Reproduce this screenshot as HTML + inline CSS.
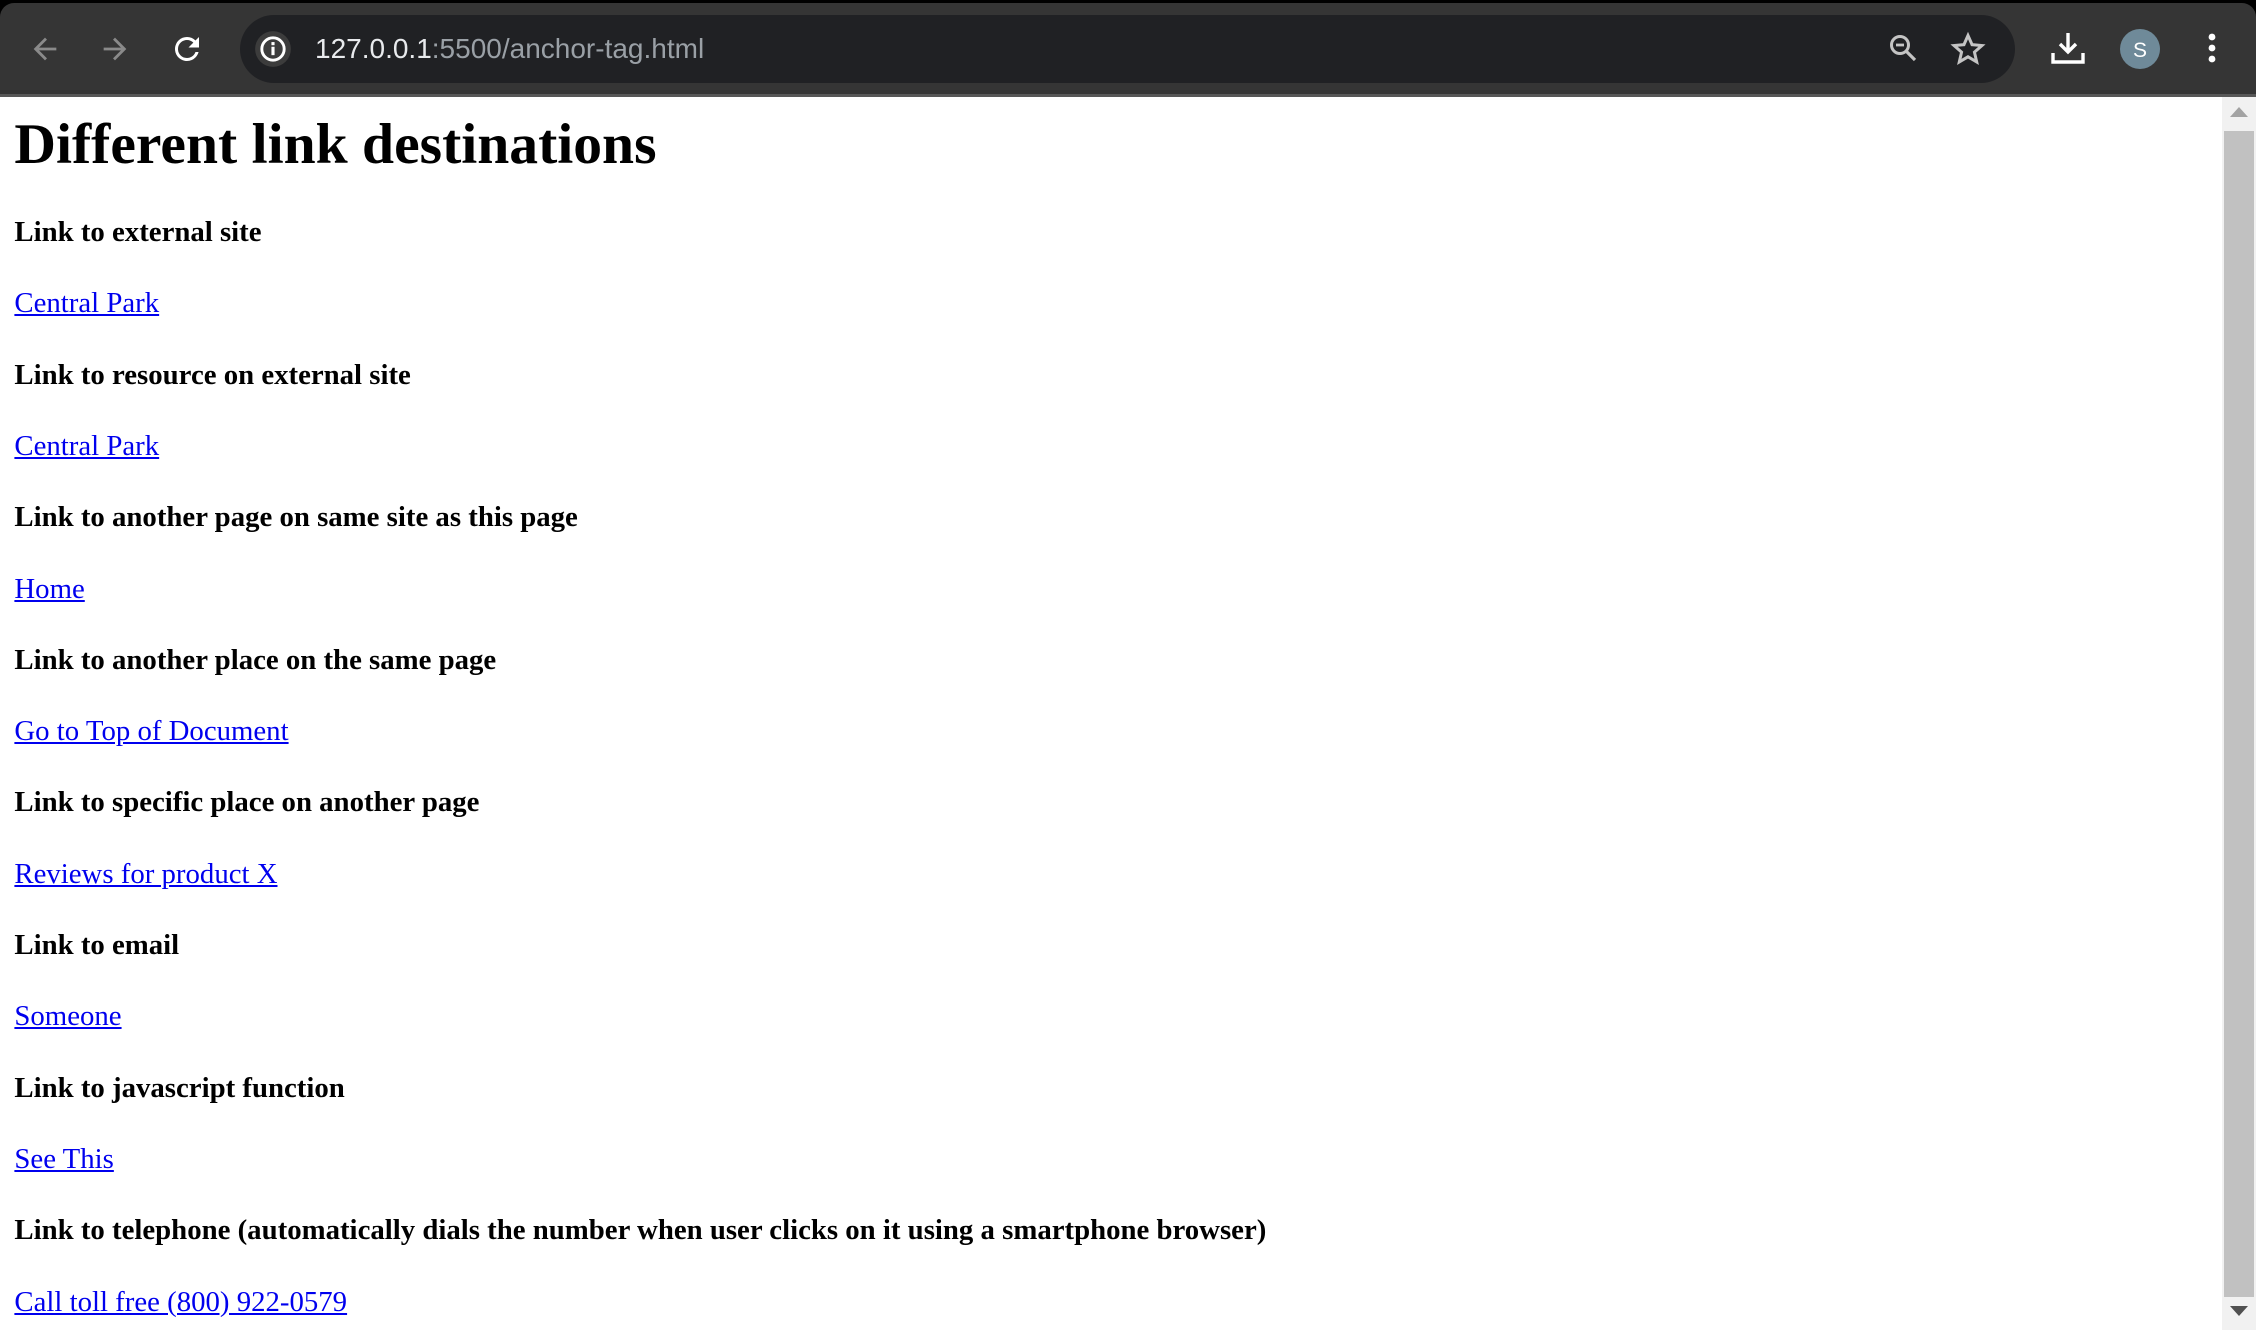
<!DOCTYPE html>
<html><head><meta charset="utf-8">
<style>
html,body{margin:0;padding:0;width:2256px;height:1330px;overflow:hidden;background:#000;}
#bar{position:absolute;left:0;top:3px;width:2256px;height:91px;background:#353535;border-radius:14px 14px 0 0;}
#line{position:absolute;left:0;top:94px;width:2256px;height:3px;background:#575757;}
#omni{position:absolute;left:240px;top:15px;width:1775px;height:68px;background:#202124;border-radius:34px;}
#url{position:absolute;left:315px;top:30px;font-family:"Liberation Sans",sans-serif;font-size:28px;color:#e8eaed;line-height:38px;letter-spacing:0px}
#url span{color:#9aa0a6}
#content{position:absolute;left:0;top:97px;width:2222px;height:1233px;background:#fff;overflow:hidden;}
#inner{zoom:1.8;margin:8px;margin-top:0;font-family:"Liberation Serif",serif;font-size:16px;color:#000;}
#inner h1{margin:0.67em 0;margin-top:8.6px;font-size:2em;}
#inner h4{margin:1.33em 0;}
#inner p{margin:1em 0;}
#inner a{color:#0000ee;}
#sb{position:absolute;left:2222px;top:97px;width:34px;height:1233px;background:#f1f1f1;}
#thumb{position:absolute;left:2px;top:34px;width:30px;height:1166px;background:#c1c1c1;}
svg{position:absolute;}
</style></head><body>
<div id="bar"></div>
<div id="line"></div>
<svg style="left:28px;top:32px" width="34" height="34" viewBox="0 0 24 24"><path d="M20 11H7.8l5.6-5.6L12 4l-8 8 8 8 1.4-1.4L7.8 13H20z" fill="#8a8a8a"/></svg>
<svg style="left:98px;top:32px" width="34" height="34" viewBox="0 0 24 24"><path d="M4 11h12.2l-5.6-5.6L12 4l8 8-8 8-1.4-1.4 5.6-5.6H4z" fill="#8a8a8a"/></svg>
<svg style="left:169px;top:31px" width="36" height="36" viewBox="0 0 24 24"><path d="M17.65 6.35A7.96 7.96 0 0 0 12 4a8 8 0 1 0 7.730 10h-2.08A6 6 0 1 1 12 6c1.66 0 3.14.69 4.22 1.78L13 11h7V4z" fill="#fff"/></svg>
<div id="omni"></div>
<svg style="left:254px;top:30px" width="38" height="38" viewBox="0 0 34 34"><circle cx="17" cy="17" r="16" fill="#3c3c3c"/><circle cx="17" cy="17" r="10" fill="none" stroke="#fff" stroke-width="2.6"/><rect x="15.6" y="15" width="2.8" height="7.5" fill="#fff"/><rect x="15.6" y="10.8" width="2.8" height="2.8" fill="#fff"/></svg>
<div id="url">127.0.0.1<span>:5500/anchor-tag.html</span></div>
<svg style="left:1887px;top:32px" width="34" height="34" viewBox="0 0 34 34"><circle cx="13" cy="13" r="8.5" fill="none" stroke="#c4c4c4" stroke-width="3"/><path d="M19 19l9 9" stroke="#c4c4c4" stroke-width="3.2"/><rect x="9" y="11.6" width="8" height="2.8" fill="#c4c4c4"/></svg>
<svg style="left:1950px;top:31px" width="36" height="36" viewBox="0 0 24 24"><path d="M12 3l2.7 6.1 6.6.6-5 4.4 1.5 6.5L12 17.2 6.2 20.6l1.5-6.5-5-4.4 6.6-.6z" fill="none" stroke="#c4c4c4" stroke-width="2"/></svg>
<svg style="left:2050px;top:31px" width="36" height="36" viewBox="0 0 36 36"><path d="M18 2v18M10 13l8 8 8-8" fill="none" stroke="#fff" stroke-width="3.4"/><path d="M3 22v9h30v-9" fill="none" stroke="#fff" stroke-width="3.4"/></svg>
<svg style="left:2120px;top:29px" width="40" height="40" viewBox="0 0 40 40"><circle cx="20" cy="20" r="20" fill="#6f8a99"/><text x="20" y="28" text-anchor="middle" font-family="Liberation Sans,sans-serif" font-size="21" fill="#fff">S</text></svg>
<svg style="left:2205px;top:32px" width="14" height="36" viewBox="0 0 14 36"><circle cx="7" cy="5" r="3.4" fill="#fff"/><circle cx="7" cy="16" r="3.4" fill="#fff"/><circle cx="7" cy="27" r="3.4" fill="#fff"/></svg>
<div id="content"><div id="inner">
<h1>Different link destinations</h1>
<h4>Link to external site</h4>
<p><a href="#">Central Park</a></p>
<h4>Link to resource on external site</h4>
<p><a href="#">Central Park</a></p>
<h4>Link to another page on same site as this page</h4>
<p><a href="#">Home</a></p>
<h4>Link to another place on the same page</h4>
<p><a href="#">Go to Top of Document</a></p>
<h4>Link to specific place on another page</h4>
<p><a href="#">Reviews for product X</a></p>
<h4>Link to email</h4>
<p><a href="#">Someone</a></p>
<h4>Link to javascript function</h4>
<p><a href="#">See This</a></p>
<h4>Link to telephone (automatically dials the number when user clicks on it using a smartphone browser)</h4>
<p><a href="#">Call toll free (800) 922-0579</a></p>
</div></div>
<div id="sb"><div id="thumb"></div>
<svg style="left:8px;top:10px" width="18" height="10" viewBox="0 0 18 10"><path d="M0 10L9 0l9 10z" fill="#a3a3a3"/></svg>
<svg style="left:8px;top:1209px" width="18" height="10" viewBox="0 0 18 10"><path d="M0 0l9 10 9-10z" fill="#505050"/></svg>
</div>
</body></html>
